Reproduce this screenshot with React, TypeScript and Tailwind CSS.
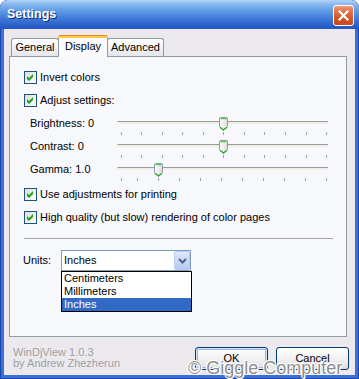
import React from "react";

function CheckBox() {
  return (
    <svg width="13" height="13" viewBox="0 0 13 13" className="shrink-0">
      <defs>
        <linearGradient id="cbg" x1="0" y1="0" x2="1" y2="1">
          <stop offset="0" stopColor="#dcdcd7" />
          <stop offset="1" stopColor="#ffffff" />
        </linearGradient>
      </defs>
      <rect x="0.5" y="0.5" width="12" height="12" fill="url(#cbg)" stroke="#1c5180" />
      <polygon points="3,5 5,7 9,3 9,6 5,10 3,8" fill="#21a121" />
    </svg>
  );
}

function CheckRow({ label, top }: { label: string; top: string }) {
  return (
    <div className={`flex items-center h-[13px] ${top}`}>
      <CheckBox />
      <span className="ml-[3px] leading-[13px] whitespace-nowrap">{label}</span>
    </div>
  );
}

function Thumb() {
  return (
    <svg width="9" height="14" viewBox="0 0 9 14">
      <defs>
        <linearGradient id="thg" x1="0" y1="0" x2="1" y2="0">
          <stop offset="0" stopColor="#ffffff" />
          <stop offset="1" stopColor="#dcdcd6" />
        </linearGradient>
      </defs>
      <path
        d="M0.5 1.5 Q0.5 0.5 1.5 0.5 H7.5 Q8.5 0.5 8.5 1.5 V9.5 L4.5 13.5 L0.5 9.5 Z"
        fill="url(#thg)"
        stroke="#8b99a8"
      />
      <path d="M1.5 1.5 H7.5" stroke="#5cc85c" strokeWidth="1.4" />
      <path d="M1 10.2 L4.5 13 L8 10.2" stroke="#21a121" strokeWidth="1.2" fill="none" />
    </svg>
  );
}

function Slider({ thumb, ticks }: { thumb: number; ticks: number[] }) {
  return (
    <div className="relative w-[211px] h-[23px]">
      <div className="absolute left-0 right-0 top-[5px] h-[3px] rounded-l-[2px] border-t border-[#9c9b97] bg-[#efeee8]" />
      {ticks.map((t) => (
        <div key={t} className="absolute top-[16px] w-px h-[3px] bg-[#a3a3a3]" style={{ left: t }} />
      ))}
      <div className="absolute top-[1px] leading-none" style={{ left: thumb }}>
        <Thumb />
      </div>
    </div>
  );
}

const bTicks = [4, 24, 45, 65, 86, 106, 127, 147, 168, 189, 209];
const gTicks = [4, 20, 41, 62, 83, 104, 125, 146, 167, 188, 209];

function SliderRow({ label, thumb, ticks }: { label: string; thumb: number; ticks: number[] }) {
  return (
    <div className="flex h-[23px]">
      <div className="ml-[6px] w-[87px] h-[14px] leading-[14px] whitespace-nowrap">{label}</div>
      <Slider thumb={thumb} ticks={ticks} />
    </div>
  );
}

function Tab({ label, selected, w }: { label: string; selected?: boolean; w: string }) {
  if (selected) {
    return (
      <div
        className={`${w} h-[22px] -mb-px -ml-px border border-[#919b9c] border-b-0 border-t-0 rounded-t-[3px] bg-[#fbfbfd] flex flex-col`}
      >
        <div className="h-[3px] rounded-t-[3px] bg-[linear-gradient(to_bottom,#e68b2c_0%,#e68b2c_33%,#ffc73c_34%,#ffc73c_100%)] -mx-px" />
        <div className="flex-1 flex items-center justify-center pb-[2px]">{label}</div>
      </div>
    );
  }
  return (
    <div
      className={`${w} h-[18px] -ml-px first:ml-0 border border-b-0 border-[#919b9c] rounded-t-[3px] bg-[linear-gradient(to_bottom,#ffffff_0%,#f3f3f6_50%,#e6e5ec_100%)] flex items-center justify-center`}
    >
      {label}
    </div>
  );
}

function Button({ label, def }: { label: string; def?: boolean }) {
  return (
    <div
      className={`w-[73px] h-[23px] rounded-[3px] border border-[#003c74] bg-[linear-gradient(to_bottom,#ffffff_0%,#f4f4f4_40%,#e3e2e8_90%,#d6d5dc_100%)] flex items-center justify-center ${
        def ? "shadow-[inset_0_0_0_1px_#cee7ff,inset_0_0_0_2px_#98b8ea]" : ""
      }`}
    >
      {label}
    </div>
  );
}

export default function App() {
  return (
    <div className="w-[359px] h-[379px] bg-white">
      <div className="w-[359px] h-[379px] flex flex-col rounded-t-[8px] overflow-hidden bg-[#3a6ed8] shadow-[inset_0_0_0_1px_#1d45b0] font-['Liberation_Sans',Arial,sans-serif] text-[11px] text-black">
        {/* Title bar */}
        <div className="h-[29px] shrink-0 flex items-center pl-[7px] pr-[5px] bg-[linear-gradient(to_bottom,#b3d3f6_0%,#86b8ee_15%,#5b97e3_40%,#3a73d6_70%,#2a5ec8_90%,#2556c2_100%)]">
          <span className="font-bold text-[12.5px] text-white [text-shadow:1px_1px_0_#0f2a7a]">Settings</span>
          <div className="ml-auto mt-[1px] w-[21px] h-[21px] rounded-[3px] border border-white bg-[linear-gradient(to_bottom,#f09a7c_0%,#e06a40_35%,#d04e22_75%,#c9481e_100%)] flex items-center justify-center">
            <svg width="11" height="11" viewBox="0 0 11 11">
              <path d="M1.5 1.5 L9.5 9.5 M9.5 1.5 L1.5 9.5" stroke="#ffffff" strokeWidth="2.2" strokeLinecap="square" />
            </svg>
          </div>
        </div>

        {/* Body */}
        <div className="flex-1 mx-[4px] mb-[4px] bg-[#ebe9ed] flex flex-col relative">
          <div className="ml-[5px] mt-[6px] w-[338px] flex flex-col">
            <div className="relative z-10 h-[21px] flex items-end pl-[2px]">
              <Tab label="General" w="w-[48px]" />
              <Tab label="Display" selected w="w-[50px]" />
              <Tab label="Advanced" w="w-[57px]" />
            </div>
            <div className="h-[281px] border border-[#919b9c] bg-[#f7f8fc] flex flex-col pl-[14px] relative">
              <CheckRow label="Invert colors" top="mt-[14px]" />
              <CheckRow label="Adjust settings:" top="mt-[10px]" />
              <div className="mt-[9px] flex flex-col">
                <SliderRow label="Brightness: 0" thumb={102} ticks={bTicks} />
                <SliderRow label="Contrast: 0" thumb={102} ticks={bTicks} />
                <SliderRow label="Gamma: 1.0" thumb={37} ticks={gTicks} />
              </div>
              <CheckRow label="Use adjustments for printing" top="mt-[3px]" />
              <CheckRow label="High quality (but slow) rendering of color pages" top="mt-[10px]" />
              <div className="mt-[14px] w-[309px] h-px bg-[#a5a4a8]" />
              <div className="mt-[11px] -ml-px flex items-center h-[21px]">
                <div className="w-[38px]">Units:</div>
                <div className="relative w-[130px] h-[21px] border border-[#7f9db9] bg-white flex items-center">
                  <span className="flex-1 pl-[2px]">Inches</span>
                  <div className="w-[16px] h-[19px] rounded-[2px] border border-[#b9cdf4] bg-[linear-gradient(to_bottom,#dfe8fb_0%,#c4d5f8_60%,#b5c9f3_100%)] flex items-center justify-center">
                    <svg width="9" height="6" viewBox="0 0 9 6">
                      <path d="M1 1 L4.5 4.5 L8 1" stroke="#4d6185" strokeWidth="2" fill="none" />
                    </svg>
                  </div>
                  <div className="absolute top-[20px] -left-px w-[131px] border border-black bg-white z-20 flex flex-col">
                    <div className="h-[13px] leading-[13px] pl-[2px]">Centimeters</div>
                    <div className="h-[13px] leading-[13px] pl-[2px]">Millimeters</div>
                    <div className="h-[13px] leading-[13px] pl-[2px] bg-[#316ac5] text-white">Inches</div>
                  </div>
                </div>
              </div>
            </div>
          </div>

          <div className="flex pl-[9px] pt-[10px] pr-[6px]">
            <div className="text-[#a19fa6] leading-[11px] whitespace-nowrap">
              WinDjView 1.0.3
              <br />
              by Andrew Zhezherun
            </div>
            <div className="ml-auto flex gap-[8px]">
              <Button label="OK" def />
              <Button label="Cancel" />
            </div>
          </div>

          <div className="absolute left-[184px] top-[330px] text-[18px] leading-[18px] whitespace-nowrap text-[#8e8e8e] [text-shadow:1px_0_0_#fff,-1px_0_0_#fff,0_1px_0_#fff,0_-1px_0_#fff,1px_1px_0_#fff,-1px_-1px_0_#fff]">
            © Giggle Computer
          </div>
        </div>
      </div>
    </div>
  );
}
